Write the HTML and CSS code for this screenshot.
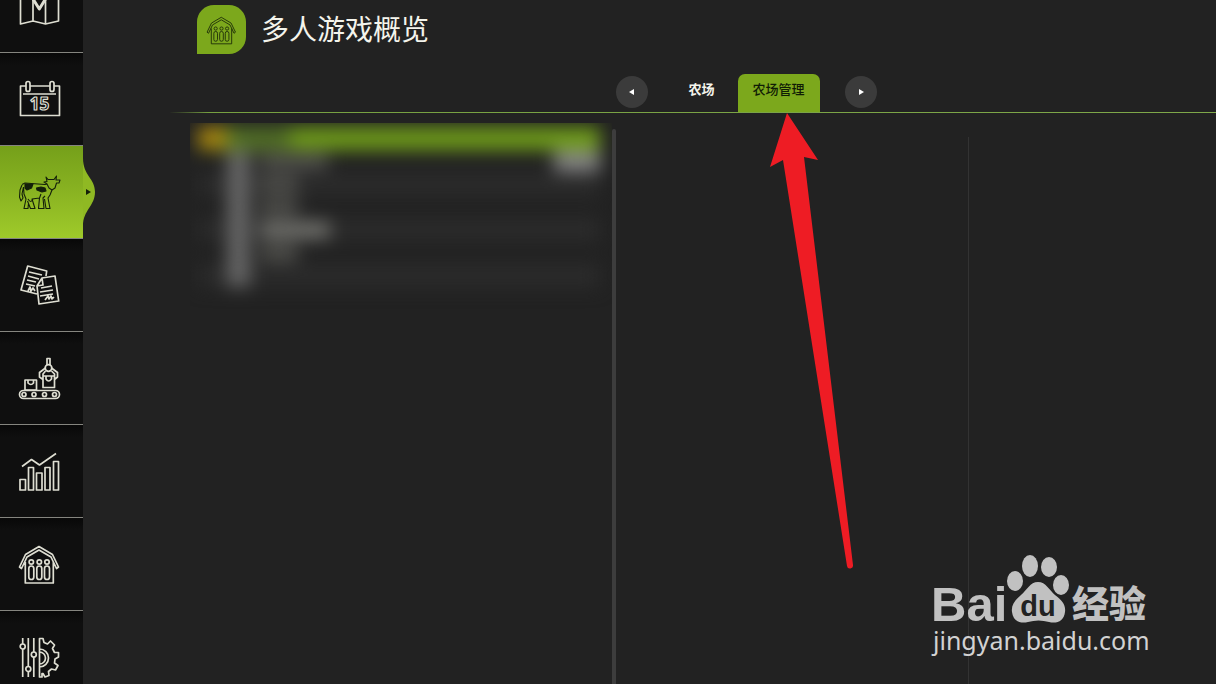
FILE: index.html
```html
<!DOCTYPE html>
<html lang="zh-CN">
<head>
<meta charset="utf-8">
<title>多人游戏概览</title>
<link rel="stylesheet" href="styles.css">
</head>
<body>
<div class="app">
  <nav class="sidebar" aria-label="主菜单">
    <button class="side-item" type="button" aria-label="地图">
      <svg class="side-icon" viewBox="0 0 44 44"><path d="M2.500 9L15 5L27.500 9L40.500 5V37L27.500 40L15 37L2.500 40ZM15 5V37M27.500 9V40"/><path class="thick" d="M15 15L21.300 25L27.500 15"/></svg>
    </button>
    <button class="side-item" type="button" aria-label="日历">
      <svg class="side-icon" viewBox="0 0 44 44"><path d="M8 9H2.500V38.500H41.500V9H36M12 9H32M5 17H38"/><rect x="8" y="4.500" width="4" height="10" rx="2"/><rect x="32" y="4.500" width="4" height="10" rx="2"/><text class="day" x="21.500" y="33" text-anchor="middle">15</text></svg>
    </button>
    <button class="side-item active" type="button" aria-label="动物" aria-current="page">
      <svg class="side-icon cow" viewBox="0 0 44 44"><path d="M4 15L2 20L1.500 27L3 31L5 28L4 24L5.500 17M4 14.500L7 13L20 14L27 14.500L29 14M26 12L29 11.500L28 7L30 9.500H36L38.500 6L38 10L42 10L41 13L38.500 13L37 18L34 20L31 18L29 14ZM34 20L32 25L30 28L32 38.500H28L26.500 29M27 26L25 28L26 38.500H20.500L21.500 28L23 24M21.500 28L14 29L17 38.500H12.500L9.500 31M5.500 17L6 24L8 29L6 38.500H10L10.500 33M10 29Q13 34 15 29"/><path class="patch" d="M7 14L15 14L13.500 18L9 20L7 18ZM18.500 18L23 17L27 18L28 21L24 22L19 20Z"/></svg>
      <svg class="bump" viewBox="0 0 12 92"><path class="bump-shape" d="M0 12C0 30 12 32 12 46C12 60 0 64 0 80Z"/><path class="bump-arrow" d="M3 43L8 46L3 49Z"/></svg>
    </button>
    <button class="side-item" type="button" aria-label="合同">
      <svg class="side-icon" viewBox="0 0 44 44"><path d="M19 31L3 27L9.700 3L28.700 8L28 13M11 9L24 12M10 13L21 16M9 17L18 19M8 21L17 23M10 28L12 24L13 28L15 25L17 28M24 15L37 13L40.700 38L21 41L19 23ZM24 15L25 22L19 23M23 25L34 23M22 29L35 27M22 33L35 31M27 37L30 33L31 36L33 33L34 36L36 34"/></svg>
    </button>
    <button class="side-item" type="button" aria-label="生产">
      <svg class="side-icon" viewBox="0 0 44 44"><rect x="1.500" y="34.500" width="40" height="8" rx="4"/><circle cx="6" cy="38.500" r="2"/><circle cx="16" cy="38.500" r="2"/><circle cx="26.500" cy="38.500" r="2"/><circle cx="36.500" cy="38.500" r="2"/><path d="M7 24H18.500V34H7ZM10 24V27Q13 30 15.500 27V24M25 20H36.500V31.500H25ZM28 20V23Q30.500 27 33.500 23V20M29 9V2.500H32V9M27.500 12L21.500 16.500V21L25 23.500M33.500 12L39.500 16.500V21L36.500 23.500M27.500 15L25 18V20M33.500 15L36.500 18V20"/><circle cx="30.500" cy="12" r="3.300"/></svg>
    </button>
    <button class="side-item" type="button" aria-label="统计">
      <svg class="side-icon" viewBox="0 0 44 44"><path d="M2 30.500H7.500V41H2ZM10.500 18.500H15.500V41H10.500ZM18.500 24H24V41H18.500ZM27 18.500H32V41H27ZM35.500 12.500H40.500V41H35.500ZM4 17.500L13.500 10.500L21.500 16L38 4.500"/></svg>
    </button>
    <button class="side-item" type="button" aria-label="多人游戏">
      <svg class="side-icon" viewBox="0 0 44 44"><path d="M1.500 25L7.500 12.500L21 4.500L34.500 12.500L40.500 25L38.500 26.500L33 15L21 8L9 15L3.500 26.500ZM7.300 20V41H35.300V20"/><circle cx="13.300" cy="20" r="2.200"/><circle cx="21.300" cy="20" r="2.200"/><circle cx="29" cy="20" r="2.200"/><rect x="10.800" y="24" width="5" height="13.500" rx="2.500"/><rect x="18.800" y="24" width="5" height="13.500" rx="2.500"/><rect x="26.500" y="24" width="5" height="13.500" rx="2.500"/></svg>
    </button>
    <button class="side-item" type="button" aria-label="设置">
      <svg class="side-icon" viewBox="0 0 44 44"><path d="M4.700 3V9M4.700 14V42M10.300 3V31M10.300 37V42M15.800 3V17M15.800 22V42M21.500 3.500H25L26 7.500L29.500 9L32.500 6L36.500 10L34.500 13.500L36.500 17.500H40.500V22L37 24L36.500 28L40 30.500L37.500 35L33.500 34L30.500 36.500L31 40.500L27 42L25 38.500H24V42H21.500ZM21.500 14A9 9 0 0 1 21.500 32M21.500 17A6 6 0 0 1 21.500 29"/><circle cx="4.700" cy="11.500" r="2.500"/><circle cx="10.300" cy="34" r="2.500"/><circle cx="15.800" cy="19.500" r="2.500"/></svg>
    </button>
  </nav>

  <main class="main">
    <header class="page-head">
      <span class="badge">
        <svg class="badge-icon" viewBox="0 0 44 44"><path d="M1.500 25L7.500 12.500L21 4.500L34.500 12.500L40.500 25L38.500 26.500L33 15L21 8L9 15L3.500 26.500ZM7.300 20V41H35.300V20"/><circle cx="13.300" cy="20" r="2.200"/><circle cx="21.300" cy="20" r="2.200"/><circle cx="29" cy="20" r="2.200"/><rect x="10.800" y="24" width="5" height="13.500" rx="2.500"/><rect x="18.800" y="24" width="5" height="13.500" rx="2.500"/><rect x="26.500" y="24" width="5" height="13.500" rx="2.500"/></svg>
      </span>
      <h1 class="title">多人游戏概览</h1>
    </header>

    <div class="tabs">
      <button class="round" type="button" aria-label="上一页"><svg class="tri" viewBox="0 0 8 8"><path d="M1 4L6 1V7Z"/></svg></button>
      <div class="tab-list" role="tablist">
        <button class="tab" type="button" role="tab" aria-selected="false">农场</button>
        <button class="tab selected" type="button" role="tab" aria-selected="true">农场管理</button>
      </div>
      <button class="round" type="button" aria-label="下一页"><svg class="tri" viewBox="0 0 8 8"><path d="M7 4L2 1V7Z"/></svg></button>
    </div>

    <div class="panes">
      <section class="list-pane">
        <div class="frost" aria-hidden="true">
          <div class="rows">
            <div class="row current"><i class="mark"></i><i class="name dim"></i></div>
            <div class="row"><i class="face"></i><i class="name mid"></i><i class="state"></i></div>
            <div class="row alt"><i class="face"></i><i class="name short"></i></div>
            <div class="row"><i class="face"></i><i class="name short"></i></div>
            <div class="row alt"><i class="face"></i><i class="name bright"></i></div>
            <div class="row"><i class="face"></i><i class="name short"></i></div>
            <div class="row alt"><i class="face"></i></div>
          </div>
        </div>
      </section>
      <div class="scrollbar"></div>
      <section class="detail"></section>
      <section class="extra"></section>
    </div>
  </main>

  <svg class="pointer" viewBox="0 0 82 456" aria-hidden="true"><path d="M17 0L48 47L34 44L83 452A3 3 0 0 1 77 453L13 47L0 54Z"/></svg>

  <div class="watermark">
    <svg class="logo" viewBox="0 0 216 68" role="img" aria-label="Bai du 经验">
      <text class="bai" x="-2" y="66">Bai</text>
      <ellipse cx="82" cy="26" rx="8" ry="10"/><ellipse cx="97" cy="11" rx="8" ry="11"/><ellipse cx="116" cy="12" rx="8" ry="10"/><ellipse cx="128" cy="30" rx="8" ry="10"/>
      <path d="M105 27C113 27 116 35 122 40C129 45 133 50 132 57C131 66 124 69 116 67C109 65 102 65 95 67C87 69 80 66 79 57C78 50 82 45 88 40C94 35 97 27 105 27Z"/>
      <text class="du" x="105" y="61" text-anchor="middle">du</text>
      <text class="jy" x="139" y="63">经验</text>
    </svg>
    <span class="url">jingyan.baidu.com</span>
  </div>
</div>
</body>
</html>
```

FILE: styles.css
```css
* {
  box-sizing: border-box;
}

body {
  margin: 0;
  background: #222;
  color: #f4f4ec;
  font-family: "Noto Sans CJK SC", sans-serif;
}

button {
  border: 0;
  padding: 0;
  background: none;
  color: inherit;
  font: inherit;
}

.app {
  position: relative;
  display: flex;
  height: 100vh;
  overflow: hidden;
}

/* Sidebar */
.sidebar {
  flex: none;
  width: 83px;
  margin-top: -40px;
  background: #0d0d0d;
}

.side-item {
  position: relative;
  display: flex;
  align-items: center;
  justify-content: center;
  width: 100%;
  height: 93px;
  padding-right: 3px;
  border-bottom: 1px solid #85857f;
  background: linear-gradient(#080808, #0f0f0f 12px);
}

.side-icon {
  width: 44px;
  height: 44px;
  fill: none;
  stroke: #deded2;
  stroke-width: 1.700;
  stroke-linejoin: round;
}

.thick {
  stroke-width: 3;
}

.day {
  font: 700 17px "Noto Sans", sans-serif;
  stroke-width: 1.200;
}

.side-item.active {
  background: linear-gradient(#75a01a, #85af20 40%, #9fca2a);
}

.side-icon.cow {
  stroke: #14200a;
  stroke-width: 1.100;
}

.patch {
  fill: #14200a;
}

.bump {
  position: absolute;
  left: 100%;
  top: 0;
  width: 12px;
  height: 92px;
}

.bump-shape {
  fill: #8fb923;
}

.bump-arrow {
  fill: #14200a;
  stroke: none;
}

/* Heading */
.main {
  display: flex;
  flex: 1;
  flex-direction: column;
  min-width: 0;
}

.page-head {
  display: flex;
  align-items: flex-start;
  gap: 15px;
  padding: 5px 0 0 114px;
}

.badge {
  display: flex;
  align-items: center;
  justify-content: center;
  width: 49px;
  height: 49px;
  border-radius: 17px 17px 17px 0;
  background: #7ca81c;
}

.badge-icon {
  width: 32px;
  height: 32px;
  fill: none;
  stroke: #1b2b08;
  stroke-width: 1.200;
}

.title {
  margin: 0;
  font-size: 28px;
  font-weight: 400;
  line-height: 46px;
}

/* Tabs */
.tabs {
  display: flex;
  align-items: flex-end;
  justify-content: center;
  gap: 25px;
  height: 59px;
  margin-left: 87px;
  padding-left: 107px;
  border-bottom: 1px solid;
  border-image: linear-gradient(90deg, #222, #76a040 40px, #7fa84a) 1;
}

.round {
  display: flex;
  align-items: center;
  justify-content: center;
  width: 32px;
  height: 32px;
  margin-bottom: 4px;
  border-radius: 50%;
  background: #3b3b3b;
}

.tri {
  width: 8px;
  height: 8px;
  fill: #fff;
}

.tab-list {
  display: flex;
  gap: 8px;
}

.tab {
  height: 38px;
  padding: 0 15px 8px;
  border-radius: 7px 7px 0 0;
  font-size: 13px;
  font-weight: 700;
  line-height: 20px;
}

.tab.selected {
  background: #7ca81c;
  color: #101c05;
  font-weight: 500;
}

/* Content */
.panes {
  display: grid;
  flex: 1;
  grid-template-columns: 422fr 4px 352fr 248fr;
  padding: 10px 0 0 107px;
}

.frost {
  height: 200px;
  overflow: hidden;
}

.rows {
  display: grid;
  grid-auto-rows: 1fr;
  height: 164px;
  padding: 4px 12px 0 8px;
  filter: blur(9px);
}

.row {
  display: flex;
  align-items: center;
  padding-left: 29px;
}

.row.current {
  padding-left: 0;
  background: #6f9c1a;
}

.row.alt {
  background: #2b2b2b;
}

.mark {
  width: 28px;
  height: 22px;
  background: #a8860f;
}

.face {
  width: 23px;
  height: 100%;
  background: #666;
}

.name {
  width: 38px;
  height: 16px;
  margin-left: 10px;
  background: #52524e;
}

.name.dim {
  width: 60px;
  height: 20px;
  margin-left: 4px;
  background: #4f6b26;
}

.name.mid {
  width: 68px;
}

.name.bright {
  width: 70px;
  background: #777772;
}

.state {
  width: 46px;
  height: 22px;
  margin-left: auto;
  background: #828282;
}

.scrollbar {
  margin-top: 6px;
  border-radius: 2px 2px 0 0;
  background: #3d3d3d;
}

.extra {
  margin-top: 14px;
  border-left: 1px solid #333;
}

/* Overlays */
.pointer {
  position: absolute;
  left: 770px;
  top: 113px;
  width: 82px;
  height: 456px;
  overflow: visible;
  fill: #ee1c24;
}

.watermark {
  position: absolute;
  right: 67px;
  bottom: 27px;
  display: flex;
  flex-direction: column;
  width: 216px;
  color: #d2d2d2;
}

.logo {
  width: 216px;
  height: 68px;
  overflow: visible;
  fill: #c1c1c1;
}

.bai {
  font: 700 49px "Liberation Sans", sans-serif;
}

.du {
  font: 700 29px "Liberation Sans", sans-serif;
  fill: #222;
}

.jy {
  font: 900 37px "Noto Sans CJK SC", sans-serif;
}

.url {
  font: 400 25px/34px "Noto Sans", sans-serif;
  white-space: nowrap;
}
```
